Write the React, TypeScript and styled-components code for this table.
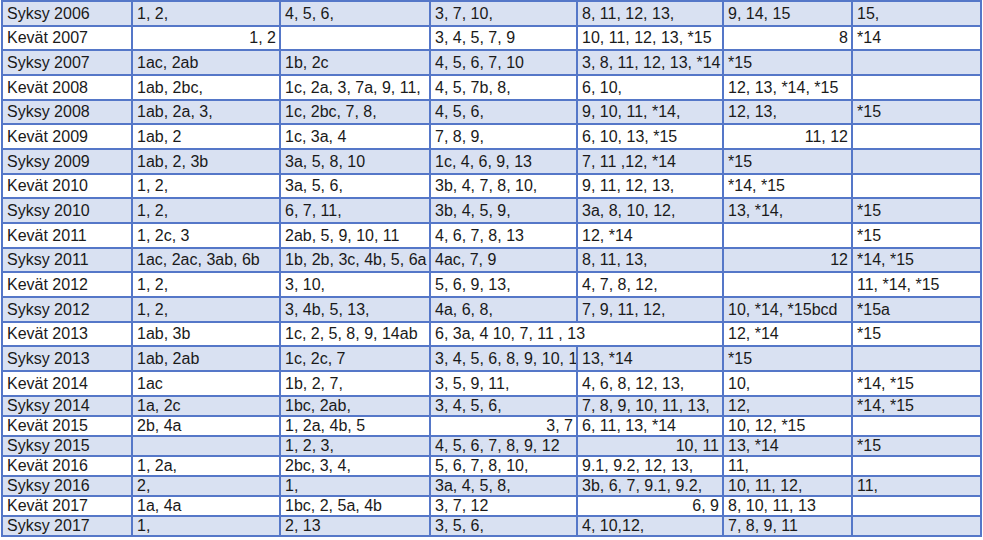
import React from "react";
import styled, { createGlobalStyle } from "styled-components";

type CellData = string | { text: string; right?: boolean; span?: number };

const rows: { term: string; cells: CellData[] }[] = [
    { term: "Syksy 2006", cells: ["1, 2,", "4, 5, 6,", "3, 7, 10,", "8, 11, 12, 13,", "9, 14, 15", "15,"] },
    { term: "Kevät 2007", cells: [{ text: "1, 2", right: true }, "", "3, 4, 5, 7, 9", "10, 11, 12, 13, *15", { text: "8", right: true }, "*14"] },
    { term: "Syksy 2007", cells: ["1ac, 2ab", "1b, 2c", "4, 5, 6, 7, 10", "3, 8, 11, 12, 13, *14", "*15", ""] },
    { term: "Kevät 2008", cells: ["1ab, 2bc,", "1c, 2a, 3, 7a, 9, 11,", "4, 5, 7b, 8,", "6, 10,", "12, 13, *14, *15", ""] },
    { term: "Syksy 2008", cells: ["1ab, 2a, 3,", "1c, 2bc, 7, 8,", "4, 5, 6,", "9, 10, 11, *14,", "12, 13,", "*15"] },
    { term: "Kevät 2009", cells: ["1ab, 2", "1c, 3a, 4", "7, 8, 9,", "6, 10, 13, *15", { text: "11, 12", right: true }, ""] },
    { term: "Syksy 2009", cells: ["1ab, 2, 3b", "3a, 5, 8, 10", "1c, 4, 6, 9, 13", "7, 11 ,12, *14", "*15", ""] },
    { term: "Kevät 2010", cells: ["1, 2,", "3a, 5, 6,", "3b, 4, 7, 8, 10,", "9, 11, 12, 13,", "*14, *15", ""] },
    { term: "Syksy 2010", cells: ["1, 2,", "6, 7, 11,", "3b, 4, 5, 9,", "3a, 8, 10, 12,", "13, *14,", "*15"] },
    { term: "Kevät 2011", cells: ["1, 2c, 3", "2ab, 5, 9, 10, 11", "4, 6, 7, 8, 13", "12, *14", "", "*15"] },
    { term: "Syksy 2011", cells: ["1ac, 2ac, 3ab, 6b", "1b, 2b, 3c, 4b, 5, 6a", "4ac, 7, 9", "8, 11, 13,", { text: "12", right: true }, "*14, *15"] },
    { term: "Kevät 2012", cells: ["1, 2,", "3, 10,", "5, 6, 9, 13,", "4, 7, 8, 12,", "", "11, *14, *15"] },
    { term: "Syksy 2012", cells: ["1, 2,", "3, 4b, 5, 13,", "4a, 6, 8,", "7, 9, 11, 12,", "10, *14, *15bcd", "*15a"] },
    { term: "Kevät 2013", cells: ["1ab, 3b", "1c, 2, 5, 8, 9, 14ab", { text: "6, 3a, 4 10, 7, 11 , 13", span: 2 }, "12, *14", "*15"] },
    { term: "Syksy 2013", cells: ["1ab, 2ab", "1c, 2c, 7", "3, 4, 5, 6, 8, 9, 10, 11,", "13, *14", "*15", ""] },
    { term: "Kevät 2014", cells: ["1ac", "1b, 2, 7,", "3, 5, 9, 11,", "4, 6, 8, 12, 13,", "10,", "*14, *15"] },
    { term: "Syksy 2014", cells: ["1a, 2c", "1bc, 2ab,", "3, 4, 5, 6,", "7, 8, 9, 10, 11, 13,", "12,", "*14, *15"] },
    { term: "Kevät 2015", cells: ["2b, 4a", "1, 2a, 4b, 5", { text: "3, 7", right: true }, "6, 11, 13, *14", "10, 12, *15", ""] },
    { term: "Syksy 2015", cells: ["", "1, 2, 3,", "4, 5, 6, 7, 8, 9, 12", { text: "10, 11", right: true }, "13, *14", "*15"] },
    { term: "Kevät 2016", cells: ["1, 2a,", "2bc, 3, 4,", "5, 6, 7, 8, 10,", "9.1, 9.2, 12, 13,", "11,", ""] },
    { term: "Syksy 2016", cells: ["2,", "1,", "3a, 4, 5, 8,", "3b, 6, 7, 9.1, 9.2,", "10, 11, 12,", "11,"] },
    { term: "Kevät 2017", cells: ["1a, 4a", "1bc, 2, 5a, 4b", "3, 7, 12", { text: "6, 9", right: true }, "8, 10, 11, 13", ""] },
    { term: "Syksy 2017", cells: ["1,", "2, 13", "3, 5, 6,", "4, 10,12,", "7, 8, 9, 11", ""] },
];

const widths = [130, 148, 150, 147, 146, 129, 129];

const GlobalStyle = createGlobalStyle`
    body {
        margin: 0;
        background: #fff;
        font-family: "Liberation Sans", Arial, sans-serif;
    }
`;

const Page = styled.div`
    padding: 0 0 0 1px;
`;

const Table = styled.table`
    width: 979px;
    table-layout: fixed;
    border-collapse: collapse;
    font-size: 16px;
    color: #1a1a1a;
`;

const Row = styled.tr<{ $shade: boolean; $compact: boolean }>`
    background: ${(p) => (p.$shade ? "#d9e1f2" : "#ffffff")};
    height: ${(p) => (p.$compact ? "20px" : "24.67px")};
`;

const Cell = styled.td<{ $right?: boolean }>`
    border: 2px solid #5577c8;
    padding: 0 3px 0 4px;
    white-space: nowrap;
    overflow: hidden;
    text-overflow: clip;
    text-align: ${(p) => (p.$right ? "right" : "left")};
    vertical-align: middle;
    line-height: 17px;
`;

const App = () => {
    return (
        <>
            <GlobalStyle />
            <Page>
                <Table>
                    <colgroup>
                        {widths.map((w, i) => (
                            <col key={i} style={{ width: w }} />
                        ))}
                    </colgroup>
                    <tbody>
                        {rows.map((r, i) => (
                            <Row key={r.term} $shade={i % 2 === 0} $compact={i >= 16}>
                                <Cell>{r.term}</Cell>
                                {r.cells.map((c, j) => {
                                    const cell = typeof c === "string" ? { text: c } : c;
                                    return (
                                        <Cell key={j} $right={cell.right} colSpan={cell.span}>
                                            {cell.text}
                                        </Cell>
                                    );
                                })}
                            </Row>
                        ))}
                    </tbody>
                </Table>
            </Page>
        </>
    );
};

export default App;
